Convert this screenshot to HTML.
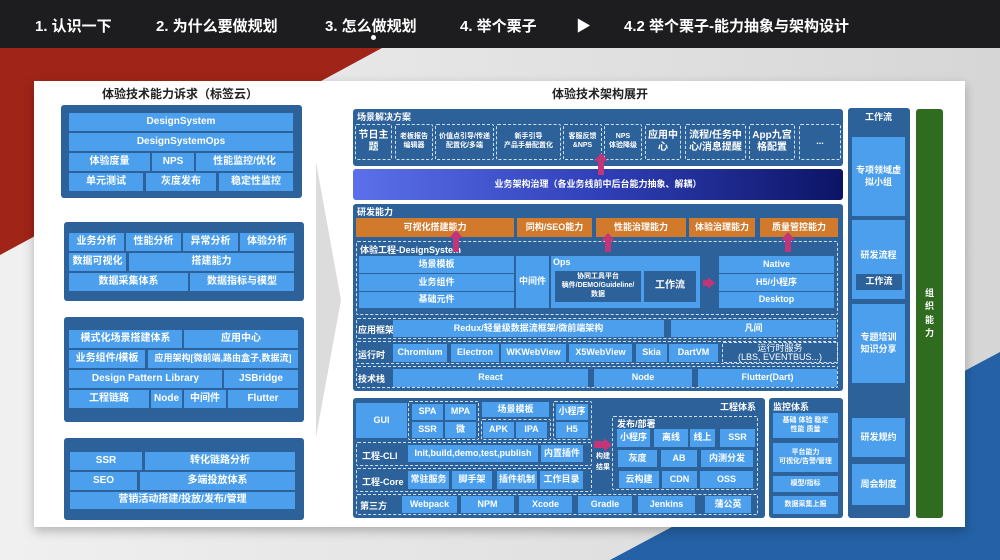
<!DOCTYPE html>
<html><head><meta charset="utf-8"><style>
*{margin:0;padding:0;box-sizing:border-box}
body{width:1000px;height:560px;overflow:hidden;position:relative;background:#e4e4e4;font-family:"Liberation Sans","Noto Sans CJK SC",sans-serif}
div{position:absolute}
.b{background:#4b9fec;color:#fff;font-size:9px;font-weight:bold;display:flex;align-items:center;justify-content:center;text-align:center;line-height:1.25;white-space:nowrap}
.L .b{font-size:10px}
.d{background:#2c6199;border-radius:3px}
.dash{border:1.5px dashed #cfe0f2;border-radius:2px}
.o{background:#d27a2c}
.t{color:#fff;font-size:9px;font-weight:bold;white-space:nowrap}
.h{color:#fff;font-size:15px;font-weight:bold;top:15px;white-space:nowrap}
.ar{width:6px;background:#c23579}
</style></head><body>
<svg style="position:absolute;left:0;top:0" width="1000" height="560">
<defs><linearGradient id="g" x1="0" x2="1"><stop offset="0" stop-color="#f0f0f0"/><stop offset="1" stop-color="#d6d6d6"/></linearGradient></defs>
<rect width="1000" height="560" fill="url(#g)"/>
<polygon points="0,48 382,48 0,255" fill="#a02418"/>
<polygon points="1000,352 1000,560 610,560" fill="#2461a6"/>
</svg>
<div style="left:0;top:0;width:1000px;height:48px;background:#1d1d1f"></div>
<div class="h" style="left:35px">1. 认识一下</div>
<div class="h" style="left:156px">2. 为什么要做规划</div>
<div class="h" style="left:325px">3. 怎么做规划</div>
<div style="left:371px;top:35px;width:5px;height:5px;border-radius:50%;background:#fff"></div>
<div class="h" style="left:460px">4. 举个栗子</div>
<div class="h" style="left:576px">▶</div>
<div class="h" style="left:624px">4.2 举个栗子-能力抽象与架构设计</div>

<div style="left:34px;top:81px;width:931px;height:446px;background:#fff;box-shadow:0 4px 10px rgba(0,0,0,.25)"></div>
<div style="left:316px;top:162px;width:0;height:0;border-top:138px solid transparent;border-bottom:137px solid transparent;border-left:25px solid #dcdcdc"></div>
<div style="left:60px;top:85px;width:240px;text-align:center;font-size:12px;font-weight:bold;color:#222">体验技术能力诉求（标签云）</div>
<div style="left:480px;top:85px;width:240px;text-align:center;font-size:12px;font-weight:bold;color:#222">体验技术架构展开</div>

<div class="L">
<div class="d" style="left:61px;top:105px;width:241px;height:93px"></div>
<div class="b" style="left:69px;top:113px;width:224px;height:18px">DesignSystem</div>
<div class="b" style="left:69px;top:133px;width:224px;height:18px">DesignSystemOps</div>
<div class="b" style="left:69px;top:153px;width:81px;height:18px">体验度量</div>
<div class="b" style="left:152px;top:153px;width:42px;height:18px">NPS</div>
<div class="b" style="left:196px;top:153px;width:97px;height:18px">性能监控/优化</div>
<div class="b" style="left:69px;top:173px;width:74px;height:18px">单元测试</div>
<div class="b" style="left:146px;top:173px;width:70px;height:18px">灰度发布</div>
<div class="b" style="left:219px;top:173px;width:74px;height:18px">稳定性监控</div>

<div class="d" style="left:64px;top:222px;width:240px;height:79px"></div>
<div class="b" style="left:69px;top:233px;width:55px;height:18px">业务分析</div>
<div class="b" style="left:126px;top:233px;width:55px;height:18px">性能分析</div>
<div class="b" style="left:183px;top:233px;width:55px;height:18px">异常分析</div>
<div class="b" style="left:240px;top:233px;width:54px;height:18px">体验分析</div>
<div class="b" style="left:69px;top:253px;width:57px;height:18px">数据可视化</div>
<div class="b" style="left:129px;top:253px;width:165px;height:18px">搭建能力</div>
<div class="b" style="left:69px;top:273px;width:119px;height:18px">数据采集体系</div>
<div class="b" style="left:190px;top:273px;width:104px;height:18px">数据指标与模型</div>

<div class="d" style="left:64px;top:317px;width:240px;height:105px"></div>
<div class="b" style="left:69px;top:330px;width:113px;height:18px">模式化场景搭建体系</div>
<div class="b" style="left:184px;top:330px;width:114px;height:18px">应用中心</div>
<div class="b" style="left:69px;top:350px;width:76px;height:18px">业务组件/模板</div>
<div class="b" style="left:148px;top:350px;width:150px;height:18px;font-size:9px">应用架构[微前端,路由盒子,数据流]</div>
<div class="b" style="left:69px;top:370px;width:153px;height:18px">Design Pattern Library</div>
<div class="b" style="left:224px;top:370px;width:74px;height:18px">JSBridge</div>
<div class="b" style="left:69px;top:390px;width:80px;height:18px">工程链路</div>
<div class="b" style="left:151px;top:390px;width:31px;height:18px">Node</div>
<div class="b" style="left:184px;top:390px;width:42px;height:18px">中间件</div>
<div class="b" style="left:228px;top:390px;width:70px;height:18px">Flutter</div>

<div class="d" style="left:64px;top:438px;width:240px;height:82px"></div>
<div class="b" style="left:70px;top:452px;width:72px;height:18px">SSR</div>
<div class="b" style="left:145px;top:452px;width:150px;height:18px">转化链路分析</div>
<div class="b" style="left:70px;top:472px;width:67px;height:18px">SEO</div>
<div class="b" style="left:140px;top:472px;width:155px;height:18px">多端投放体系</div>
<div class="b" style="left:70px;top:492px;width:225px;height:17px">营销活动搭建/投放/发布/管理</div>
</div>

<div class="d" style="left:353px;top:109px;width:490px;height:57px"></div>
<div class="t" style="left:357px;top:110px">场景解决方案</div>
<div class="b dash" style="left:355px;top:124px;width:37px;height:36px;background:none;font-size:10px">节日主<br>题</div>
<div class="b dash" style="left:395px;top:124px;width:38px;height:36px;background:none;font-size:7px">老板报告<br>编辑器</div>
<div class="b dash" style="left:435px;top:124px;width:59px;height:36px;background:none;font-size:7px">价值点引导/传递<br>配置化/多端</div>
<div class="b dash" style="left:496px;top:124px;width:65px;height:36px;background:none;font-size:7px">新手引导<br>产品手册配置化</div>
<div class="b dash" style="left:563px;top:124px;width:39px;height:36px;background:none;font-size:7px">客服反馈<br>&amp;NPS</div>
<div class="b dash" style="left:604px;top:124px;width:38px;height:36px;background:none;font-size:7px">NPS<br>体验降级</div>
<div class="b dash" style="left:645px;top:124px;width:36px;height:36px;background:none;font-size:10px">应用中<br>心</div>
<div class="b dash" style="left:685px;top:124px;width:61px;height:36px;background:none;font-size:10px">流程/任务中<br>心/消息提醒</div>
<div class="b dash" style="left:749px;top:124px;width:46px;height:36px;background:none;font-size:10px">App九宫<br>格配置</div>
<div class="b dash" style="left:799px;top:124px;width:42px;height:36px;background:none">...</div>
<div class="b" style="left:353px;top:169px;width:490px;height:31px;border-radius:3px;background:linear-gradient(90deg,#5b70ea,#3040b8 50%,#0c1466)">业务架构治理（各业务线前中后台能力抽象、解耦）</div>

<div class="d" style="left:353px;top:204px;width:490px;height:187px"></div>
<div class="t" style="left:357px;top:205px">研发能力</div>
<div class="b o" style="left:356px;top:218px;width:158px;height:19px">可视化搭建能力</div>
<div class="b o" style="left:517px;top:218px;width:75px;height:19px">同构/SEO能力</div>
<div class="b o" style="left:596px;top:218px;width:90px;height:19px">性能治理能力</div>
<div class="b o" style="left:689px;top:218px;width:66px;height:19px">体验治理能力</div>
<div class="b o" style="left:760px;top:218px;width:78px;height:19px">质量管控能力</div>
<div class="dash" style="left:356px;top:241px;width:482px;height:74px"></div>
<div class="t" style="left:360px;top:243px">体验工程-DesignSystem</div>
<div class="b" style="left:359px;top:256px;width:155px;height:17px">场景模板</div>
<div class="b" style="left:359px;top:274px;width:155px;height:17px">业务组件</div>
<div class="b" style="left:359px;top:292px;width:155px;height:16px">基础元件</div>
<div class="b" style="left:516px;top:256px;width:33px;height:52px">中间件</div>
<div class="b" style="left:551px;top:256px;width:149px;height:52px"></div>
<div class="t" style="left:553px;top:257px">Ops</div>
<div class="b" style="left:555px;top:271px;width:86px;height:31px;background:#2c6199;font-size:7px">协同工具平台<br>稿件/DEMO/Guideline/<br>数据</div>
<div class="b" style="left:644px;top:271px;width:52px;height:31px;background:#2c6199;font-size:10px">工作流</div>
<div class="b" style="left:719px;top:256px;width:115px;height:17px">Native</div>
<div class="b" style="left:719px;top:274px;width:115px;height:17px">H5/小程序</div>
<div class="b" style="left:719px;top:292px;width:115px;height:16px">Desktop</div>
<div class="dash" style="left:356px;top:318px;width:482px;height:21px"></div>
<div class="t" style="left:358px;top:323px">应用框架</div>
<div class="b" style="left:393px;top:320px;width:271px;height:17px">Redux/轻量级数据流框架/微前端架构</div>
<div class="b" style="left:671px;top:320px;width:165px;height:17px">凡间</div>
<div class="dash" style="left:356px;top:341px;width:482px;height:23px"></div>
<div class="t" style="left:358px;top:348px">运行时</div>
<div class="b" style="left:393px;top:344px;width:54px;height:18px">Chromium</div>
<div class="b" style="left:451px;top:344px;width:48px;height:18px">Electron</div>
<div class="b" style="left:501px;top:344px;width:65px;height:18px">WKWebView</div>
<div class="b" style="left:569px;top:344px;width:63px;height:18px">X5WebView</div>
<div class="b" style="left:636px;top:344px;width:31px;height:18px">Skia</div>
<div class="b" style="left:669px;top:344px;width:49px;height:18px">DartVM</div>
<div class="b dash" style="left:722px;top:342px;width:116px;height:21px;background:none;font-weight:normal;line-height:1.05;padding-top:1px">运行时服务<br>(LBS, EVENTBUS...)</div>
<div class="dash" style="left:356px;top:366px;width:482px;height:22px"></div>
<div class="t" style="left:358px;top:372px">技术栈</div>
<div class="b" style="left:393px;top:369px;width:195px;height:18px">React</div>
<div class="b" style="left:594px;top:369px;width:98px;height:18px">Node</div>
<div class="b" style="left:698px;top:369px;width:139px;height:18px">Flutter(Dart)</div>

<div class="d" style="left:353px;top:398px;width:412px;height:120px"></div>
<div class="t" style="left:720px;top:400px">工程体系</div>
<div class="b" style="left:356px;top:403px;width:51px;height:35px">GUI</div>
<div class="dash" style="left:408px;top:401px;width:71px;height:39px"></div>
<div class="b" style="left:412px;top:404px;width:31px;height:16px">SPA</div>
<div class="b" style="left:445px;top:404px;width:31px;height:16px">MPA</div>
<div class="b" style="left:412px;top:422px;width:31px;height:16px">SSR</div>
<div class="b" style="left:445px;top:422px;width:31px;height:16px">微</div>
<div class="b" style="left:482px;top:402px;width:67px;height:15px">场景模板</div>
<div class="dash" style="left:481px;top:419px;width:70px;height:21px"></div>
<div class="b" style="left:483px;top:422px;width:31px;height:16px">APK</div>
<div class="b" style="left:516px;top:422px;width:31px;height:16px">IPA</div>
<div class="dash" style="left:553px;top:401px;width:39px;height:39px"></div>
<div class="b" style="left:556px;top:404px;width:32px;height:16px">小程序</div>
<div class="b" style="left:556px;top:422px;width:32px;height:16px">H5</div>
<div class="dash" style="left:356px;top:442px;width:236px;height:24px"></div>
<div class="t" style="left:362px;top:449px">工程-CLI</div>
<div class="b" style="left:408px;top:445px;width:130px;height:17px">Init,build,demo,test,publish</div>
<div class="b" style="left:541px;top:445px;width:42px;height:17px">内置插件</div>
<div class="dash" style="left:356px;top:468px;width:236px;height:24px"></div>
<div class="t" style="left:362px;top:475px">工程-Core</div>
<div class="b" style="left:408px;top:471px;width:41px;height:18px">常驻服务</div>
<div class="b" style="left:452px;top:471px;width:40px;height:18px">脚手架</div>
<div class="b" style="left:497px;top:471px;width:40px;height:18px">插件机制</div>
<div class="b" style="left:540px;top:471px;width:43px;height:18px">工作目录</div>
<div class="t" style="left:596px;top:451px;font-size:7px;line-height:1.6">构建<br>结果</div>
<div class="dash" style="left:612px;top:416px;width:146px;height:74px"></div>
<div class="t" style="left:617px;top:417px">发布/部署</div>
<div class="b" style="left:617px;top:429px;width:33px;height:18px">小程序</div>
<div class="b" style="left:654px;top:429px;width:34px;height:18px">离线</div>
<div class="b" style="left:690px;top:429px;width:25px;height:18px">线上</div>
<div class="b" style="left:720px;top:429px;width:35px;height:18px">SSR</div>
<div class="b" style="left:618px;top:450px;width:39px;height:17px">灰度</div>
<div class="b" style="left:661px;top:450px;width:36px;height:17px">AB</div>
<div class="b" style="left:701px;top:450px;width:52px;height:17px">内测分发</div>
<div class="b" style="left:619px;top:471px;width:40px;height:17px">云构建</div>
<div class="b" style="left:662px;top:471px;width:35px;height:17px">CDN</div>
<div class="b" style="left:700px;top:471px;width:53px;height:17px">OSS</div>
<div class="dash" style="left:356px;top:494px;width:402px;height:21px"></div>
<div class="t" style="left:360px;top:499px">第三方</div>
<div class="b" style="left:402px;top:496px;width:55px;height:17px">Webpack</div>
<div class="b" style="left:461px;top:496px;width:53px;height:17px">NPM</div>
<div class="b" style="left:519px;top:496px;width:53px;height:17px">Xcode</div>
<div class="b" style="left:578px;top:496px;width:54px;height:17px">Gradle</div>
<div class="b" style="left:638px;top:496px;width:57px;height:17px">Jenkins</div>
<div class="b" style="left:705px;top:496px;width:46px;height:17px">蒲公英</div>

<div class="d" style="left:769px;top:398px;width:74px;height:120px"></div>
<div class="t" style="left:773px;top:400px">监控体系</div>
<div class="b" style="left:773px;top:413px;width:65px;height:25px;font-size:7px">基础 体验 稳定<br>性能 质量</div>
<div class="b" style="left:773px;top:443px;width:65px;height:29px;font-size:7px">平台能力<br>可视化/告警/管理</div>
<div class="b" style="left:773px;top:476px;width:65px;height:16px;font-size:7px">模型/指标</div>
<div class="b" style="left:773px;top:496px;width:65px;height:18px;font-size:7px">数据采集上报</div>

<div class="d" style="left:848px;top:108px;width:62px;height:410px"></div>
<div class="t" style="left:865px;top:110px">工作流</div>
<div class="b" style="left:852px;top:137px;width:53px;height:79px">专项领域虚<br>拟小组</div>
<div class="b" style="left:852px;top:220px;width:53px;height:79px;flex-direction:column"><span style="margin-bottom:8px">研发流程</span></div>
<div class="b" style="left:856px;top:274px;width:46px;height:16px;background:#2c6199">工作流</div>
<div class="b" style="left:852px;top:304px;width:53px;height:79px">专题培训<br>知识分享</div>
<div class="b" style="left:852px;top:418px;width:53px;height:39px">研发规约</div>
<div class="b" style="left:852px;top:464px;width:53px;height:41px">周会制度</div>
<div class="b" style="left:916px;top:109px;width:27px;height:409px;background:#2f6c1f;border-radius:3px;white-space:normal;line-height:1.45;padding:0 8px">组织能力</div>

<div class="ar" style="left:598px;top:159px;height:16px"></div>
<div style="left:594px;top:153px;border-left:7px solid transparent;border-right:7px solid transparent;border-bottom:8px solid #c23579;width:0;height:0"></div>
<div class="ar" style="left:453px;top:236px;height:16px"></div>
<div style="left:449px;top:230px;border-left:7px solid transparent;border-right:7px solid transparent;border-bottom:8px solid #c23579;width:0;height:0"></div>
<div class="ar" style="left:605px;top:240px;height:12px"></div>
<div style="left:601px;top:233px;border-left:7px solid transparent;border-right:7px solid transparent;border-bottom:8px solid #c23579;width:0;height:0"></div>
<div class="ar" style="left:785px;top:238px;height:14px"></div>
<div style="left:781px;top:232px;border-left:7px solid transparent;border-right:7px solid transparent;border-bottom:8px solid #c23579;width:0;height:0"></div>
<div style="left:703px;top:280px;width:5px;height:6px;background:#c23579"></div>
<div style="left:708px;top:277px;border-top:6px solid transparent;border-bottom:6px solid transparent;border-left:7px solid #c23579;width:0;height:0"></div>
<div style="left:594px;top:441px;width:10px;height:7px;background:#c23579"></div>
<div style="left:604px;top:438px;border-top:7px solid transparent;border-bottom:7px solid transparent;border-left:8px solid #c23579;width:0;height:0"></div>
</body></html>
